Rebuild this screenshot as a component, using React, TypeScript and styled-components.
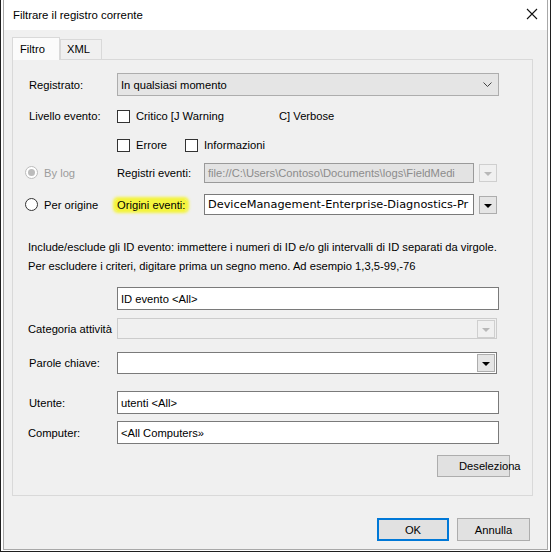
import React from "react"
import styled, { createGlobalStyle } from "styled-components"

const Global = createGlobalStyle`
  html, body { margin: 0; padding: 0; background: #ffffff; }
  body { font-family: "Liberation Sans", Arial, sans-serif; font-size: 11.2px; color: #000; }
`

const Window = styled.div`
  width: 551px;
  height: 552px;
  box-sizing: border-box;
  border: 1px solid #1f1f1f;
  border-top: none;
  background: #ffffff;
  display: flex;
  flex-direction: column;
  overflow: hidden;
`

const Frame = styled.div`
  flex: 1;
  display: flex;
  flex-direction: column;
  margin: 0 2px 1px 2px;
  border-left: 1px solid #a8a8a8;
  border-right: 1px solid #a8a8a8;
  border-bottom: 1px solid #a8a8a8;
`

const TitleBar = styled.div`
  height: 30px;
  display: flex;
  align-items: center;
  justify-content: space-between;
  padding: 0 9px 0 9px;
  background: #ffffff;
  font-size: 11.4px;
`

const Close = styled.div`
  width: 12px;
  height: 12px;
  display: flex;
  margin-top: -2px;
`

const Body = styled.div`
  flex: 1;
  background: #f0f0f0;
  padding: 6px 14px 0 8px;
  display: flex;
  flex-direction: column;
`

const Tabs = styled.div`
  display: flex;
  align-items: flex-end;
  height: 23px;
`

const Tab = styled.div<{ $active?: boolean }>`
  box-sizing: border-box;
  height: ${p => (p.$active ? "23px" : "20px")};
  padding: ${p => (p.$active ? "5px 10px 0 7px" : "3px 10px 0 6px")};
  width: ${p => (p.$active ? "48px" : "42px")};
  background: ${p => (p.$active ? "#fbfbfb" : "#f0f0f0")};
  border: 1px solid #d9d9d9;
  border-bottom: none;
  margin-bottom: ${p => (p.$active ? "-1px" : "0")};
  position: relative;
  z-index: ${p => (p.$active ? 2 : 1)};
`

const Panel = styled.div`
  height: 437px;
  box-sizing: border-box;
  border: 1px solid #d9d9d9;
  background: #f0f0f0;
  display: flex;
  flex-direction: column;
`

const Row = styled.div<{ $top: number; $h: number; $left?: number }>`
  display: flex;
  align-items: center;
  margin-top: ${p => p.$top}px;
  height: ${p => p.$h}px;
  padding-left: ${p => p.$left ?? 16}px;
`

const Label = styled.div<{ $w?: number }>`
  width: ${p => p.$w ?? 88}px;
  flex-shrink: 0;
  white-space: nowrap;
`

const Highlight = styled.span`
  background: #f4f43e;
  box-shadow: 0 0 3px 2px #f4f43e;
  border-radius: 3px;
  padding: 0 2px;
  margin-left: -2px;
`

const Combo = styled.div`
  width: 382px;
  height: 23px;
  box-sizing: border-box;
  border: 1px solid #adadad;
  background: #e5e5e5;
  display: flex;
  align-items: center;
  justify-content: space-between;
  padding: 0 6px 0 3px;
`

const CheckGroup = styled.div<{ $w?: number }>`
  display: flex;
  align-items: center;
  gap: 6px;
  width: ${p => (p.$w ? `${p.$w}px` : "auto")};
  flex-shrink: 0;
`

const Box = styled.div`
  width: 13px;
  height: 13px;
  box-sizing: border-box;
  border: 1px solid #333333;
  background: #ffffff;
`

const Radio = styled.div<{ $disabled?: boolean; $checked?: boolean }>`
  width: 13px;
  height: 13px;
  box-sizing: border-box;
  border-radius: 50%;
  border: 1px solid ${p => (p.$disabled ? "#bcbcbc" : "#333333")};
  background: #ffffff;
  display: flex;
  align-items: center;
  justify-content: center;
  margin-right: 6px;
  &::after {
    content: "";
    display: ${p => (p.$checked ? "block" : "none")};
    width: 7px;
    height: 7px;
    border-radius: 50%;
    background: ${p => (p.$disabled ? "#bcbcbc" : "#333333")};
  }
`

const RadioLabel = styled.div<{ $muted?: boolean }>`
  width: 73px;
  color: ${p => (p.$muted ? "#9c9c9c" : "#000")};
`

const Field = styled.div<{ $w: number; $h: number; $disabled?: boolean; $alt?: boolean }>`
  width: ${p => p.$w}px;
  height: ${p => p.$h}px;
  box-sizing: border-box;
  border: 1px solid ${p => (p.$disabled ? "#9a9a9a" : "#7a7a7a")};
  background: ${p => (p.$disabled ? "#e3e3e3" : "#ffffff")};
  color: ${p => (p.$disabled ? "#8c8c8c" : "#000")};
  display: flex;
  align-items: center;
  padding-left: 3px;
  white-space: nowrap;
  overflow: hidden;
  font-family: ${p => (p.$alt ? '"DejaVu Sans", Verdana, sans-serif' : '"Liberation Sans", Arial, sans-serif')};
  font-size: ${p => (p.$alt ? "11.3px" : "11.2px")};
`

const DropButton = styled.div<{ $disabled?: boolean }>`
  width: 18px;
  height: 18px;
  box-sizing: border-box;
  margin-left: 5px;
  border: 1px solid ${p => (p.$disabled ? "#cfcfcf" : "#adadad")};
  background: ${p => (p.$disabled ? "#f0f0f0" : "#e5e5e5")};
  display: flex;
  align-items: center;
  justify-content: center;
  &::after {
    content: "";
    border-left: 4px solid transparent;
    border-right: 4px solid transparent;
    border-top: 4px solid ${p => (p.$disabled ? "#b8b8b8" : "#000")};
    margin-top: 2px;
  }
`

const SelectBox = styled.div<{ $disabled?: boolean; $h: number }>`
  width: 380px;
  height: ${p => p.$h}px;
  box-sizing: border-box;
  border: 1px solid ${p => (p.$disabled ? "#cccccc" : "#7a7a7a")};
  background: ${p => (p.$disabled ? "#f0f0f0" : "#ffffff")};
  display: flex;
  align-items: center;
  justify-content: flex-end;
  padding-right: 1px;
  ${DropButton} { margin-left: 0; }
`

const Help = styled.div`
  margin-top: 23px;
  padding-left: 15px;
  line-height: 19px;
  white-space: nowrap;
`

const Footer = styled.div`
  display: flex;
  justify-content: flex-end;
  gap: 8px;
  padding-top: 22px;
  padding-right: 3px;
`

const Button = styled.div<{ $primary?: boolean; $w?: number }>`
  width: ${p => p.$w ?? 73}px;
  height: 23px;
  box-sizing: border-box;
  border: ${p => (p.$primary ? "2px solid #0078d7" : "1px solid #adadad")};
  background: #e1e1e1;
  display: flex;
  align-items: center;
  justify-content: center;
`

const ClearButton = styled(Button)`
  justify-content: flex-start;
  padding-left: 21px;
  overflow: visible;
  white-space: nowrap;
  height: 22px;
`

const ActionRow = styled.div`
  display: flex;
  justify-content: flex-end;
  margin-top: 11px;
  margin-right: 22px;
`

export default function App() {
  return (
    <>
      <Global />
      <Window>
        <Frame>
          <TitleBar>
            <span>Filtrare il registro corrente</span>
            <Close>
              <svg width="12" height="12" viewBox="0 0 12 12">
                <path d="M1 1 L11 11 M11 1 L1 11" stroke="#111" strokeWidth="1.1" fill="none" />
              </svg>
            </Close>
          </TitleBar>
          <Body>
            <Tabs>
              <Tab $active>Filtro</Tab>
              <Tab>XML</Tab>
            </Tabs>
            <Panel>
              <Row $top={13} $h={23}>
                <Label>Registrato:</Label>
                <Combo>
                  <span>In qualsiasi momento</span>
                  <svg width="9" height="6" viewBox="0 0 9 6">
                    <path d="M0.5 0.5 L4.5 4.5 L8.5 0.5" stroke="#444" strokeWidth="1" fill="none" />
                  </svg>
                </Combo>
              </Row>
              <Row $top={10} $h={20}>
                <Label>Livello evento:</Label>
                <CheckGroup $w={162}>
                  <Box />
                  <span>Critico [J Warning</span>
                </CheckGroup>
                <span>C] Verbose</span>
              </Row>
              <Row $top={9} $h={20}>
                <Label />
                <CheckGroup $w={68}>
                  <Box />
                  <span>Errore</span>
                </CheckGroup>
                <CheckGroup>
                  <Box />
                  <span>Informazioni</span>
                </CheckGroup>
              </Row>
              <Row $top={7} $h={21} $left={12}>
                <Radio $disabled $checked />
                <RadioLabel $muted>By log</RadioLabel>
                <Label $w={87}>Registri eventi:</Label>
                <Field $w={270} $h={20} $disabled>file://C:\Users\Contoso\Documents\logs\FieldMedi</Field>
                <DropButton $disabled />
              </Row>
              <Row $top={11} $h={21} $left={12}>
                <Radio />
                <RadioLabel>Per origine</RadioLabel>
                <Label $w={87}>
                  <Highlight>Origini eventi:</Highlight>
                </Label>
                <Field $w={270} $h={21} $alt>DeviceManagement-Enterprise-Diagnostics-Pr</Field>
                <DropButton />
              </Row>
              <Help>
                <div>Include/esclude gli ID evento: immettere i numeri di ID e/o gli intervalli di ID separati da virgole.</div>
                <div>Per escludere i criteri, digitare prima un segno meno. Ad esempio 1,3,5-99,-76</div>
              </Help>
              <Row $top={11} $h={23}>
                <Label />
                <Field $w={382} $h={23}>ID evento &lt;All&gt;</Field>
              </Row>
              <Row $top={8} $h={21} $left={15}>
                <Label $w={89}>Categoria attività</Label>
                <SelectBox $disabled $h={21}>
                  <DropButton $disabled />
                </SelectBox>
              </Row>
              <Row $top={13} $h={22}>
                <Label>Parole chiave:</Label>
                <SelectBox $h={22}>
                  <DropButton />
                </SelectBox>
              </Row>
              <Row $top={17} $h={23}>
                <Label>Utente:</Label>
                <Field $w={382} $h={23}>utenti &lt;All&gt;</Field>
              </Row>
              <Row $top={7} $h={23} $left={15}>
                <Label $w={89}>Computer:</Label>
                <Field $w={382} $h={23}>&lt;All Computers»</Field>
              </Row>
              <ActionRow>
                <ClearButton>Deseleziona</ClearButton>
              </ActionRow>
            </Panel>
            <Footer>
              <Button $primary $w={72}>OK</Button>
              <Button $w={73}>Annulla</Button>
            </Footer>
          </Body>
        </Frame>
      </Window>
    </>
  )
}
